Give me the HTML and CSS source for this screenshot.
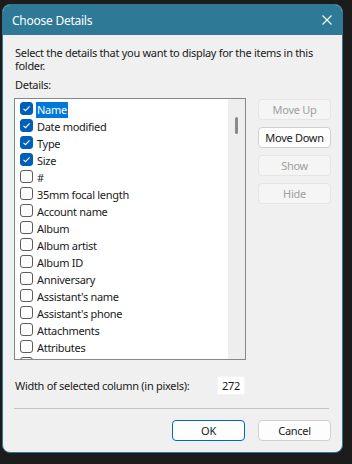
FILE: index.html
```html
<!DOCTYPE html>
<html lang="en">
<head>
    <meta charset="UTF-8">
    <title>Choose Details</title>
    <link rel="stylesheet" href="styles.css">
</head>
<body>
    <div class="dialog">
        <div class="titlebar">
            <span class="title">Choose Details</span>
            <svg class="close" width="10" height="10" viewBox="0 0 10 10">
                <path d="M0.5 0.5L9.5 9.5M9.5 0.5L0.5 9.5" stroke="#ffffff" stroke-width="1.1"/>
            </svg>
        </div>
        <div class="content">
            <p class="intro">Select the details that you want to display for the items in this folder.</p>
            <p class="label">Details:</p>
            <div class="picker">
                <div class="listbox">
                    <ul class="items">
                        <li class="item checked selected"><span class="box"></span><span class="name">Name</span></li>
                        <li class="item checked"><span class="box"></span><span class="name">Date modified</span></li>
                        <li class="item checked"><span class="box"></span><span class="name">Type</span></li>
                        <li class="item checked"><span class="box"></span><span class="name">Size</span></li>
                        <li class="item"><span class="box"></span><span class="name">#</span></li>
                        <li class="item"><span class="box"></span><span class="name">35mm focal length</span></li>
                        <li class="item"><span class="box"></span><span class="name">Account name</span></li>
                        <li class="item"><span class="box"></span><span class="name">Album</span></li>
                        <li class="item"><span class="box"></span><span class="name">Album artist</span></li>
                        <li class="item"><span class="box"></span><span class="name">Album ID</span></li>
                        <li class="item"><span class="box"></span><span class="name">Anniversary</span></li>
                        <li class="item"><span class="box"></span><span class="name">Assistant's name</span></li>
                        <li class="item"><span class="box"></span><span class="name">Assistant's phone</span></li>
                        <li class="item"><span class="box"></span><span class="name">Attachments</span></li>
                        <li class="item"><span class="box"></span><span class="name">Attributes</span></li>
                        <li class="item"><span class="box"></span></li>
                    </ul>
                    <div class="scrollbar"><div class="thumb"></div></div>
                </div>
                <div class="side-buttons">
                    <button class="btn" disabled>Move Up</button>
                    <button class="btn">Move Down</button>
                    <button class="btn" disabled>Show</button>
                    <button class="btn" disabled>Hide</button>
                </div>
            </div>
            <div class="width-row">
                <span>Width of selected column (in pixels):</span>
                <span class="width-input">272</span>
            </div>
            <div class="separator"></div>
            <div class="actions">
                <button class="btn primary">OK</button>
                <button class="btn">Cancel</button>
            </div>
        </div>
    </div>
</body>
</html>
```

FILE: styles.css
```css
* {
    margin: 0;
    padding: 0;
    box-sizing: border-box;
}

body {
    background-color: #1c1c1c;
    font-family: 'Noto Sans', 'Open Sans', sans-serif;
    font-size: 11px;
    letter-spacing: -0.3px;
    color: #1a1a1a;
    height: 464px;
    overflow: hidden;
}

.dialog {
    width: 341px;
    height: 449px;
    margin: 4px 0 0 2px;
    border: 1px solid #2e7a96;
    border-radius: 8px;
    background-color: #f0f0f0;
    overflow: hidden;
    display: flex;
    flex-direction: column;
}

.titlebar {
    height: 30px;
    background-color: #2e7a96;
    display: flex;
    align-items: center;
    justify-content: space-between;
    padding: 0 10px 0 9px;
    flex-shrink: 0;
}

.title {
    color: #ffffff;
    font-size: 12px;
    letter-spacing: -0.25px;
}

.content {
    flex: 1;
    padding: 11px 11px 0 11px;
    display: flex;
    flex-direction: column;
}

.intro {
    line-height: 13px;
    padding-left: 1px;
}

.label {
    margin-top: 6px;
    line-height: 13px;
    padding-left: 1px;
}

.picker {
    display: flex;
    gap: 12px;
    margin-top: 7px;
}

/* List of columns with checkboxes */
.listbox {
    width: 233px;
    height: 262px;
    border: 1px solid #828790;
    background-color: #ffffff;
    display: flex;
    overflow: hidden;
}

.items {
    list-style: none;
    flex: 1;
    padding-top: 1px;
    overflow: hidden;
}

.item {
    height: 17px;
    display: flex;
    align-items: center;
    padding-left: 5px;
    white-space: nowrap;
}

.box {
    width: 13px;
    height: 13px;
    border: 1px solid #5c5c5c;
    border-radius: 3px;
    background-color: #fdfdfd;
    margin-right: 3px;
    flex-shrink: 0;
}

.item.checked .box {
    border-color: #005fb8;
    background-color: #005fb8;
    background-image: url("data:image/svg+xml,%3Csvg xmlns='http://www.w3.org/2000/svg' width='11' height='11' viewBox='0 0 11 11'%3E%3Cpath d='M2.5 5.8L4.5 7.7L8.6 3.4' fill='none' stroke='white' stroke-width='1.1'/%3E%3C/svg%3E");
    background-repeat: no-repeat;
}

.name {
    padding: 0 1px;
    line-height: 16px;
    margin-top: 2px;
}

.item.selected .name {
    background-color: #0078d7;
    color: #ffffff;
}

.scrollbar {
    width: 17px;
    background-color: #eeeeee;
    padding: 18px 0 0 7px;
}

.thumb {
    width: 3px;
    height: 17px;
    border-radius: 2px;
    background-color: #8a8a8a;
}

/* Buttons */
.side-buttons {
    display: flex;
    flex-direction: column;
    gap: 7px;
    padding-top: 1px;
}

.btn {
    width: 73px;
    height: 21px;
    font-family: inherit;
    font-size: 11px;
    letter-spacing: -0.3px;
    color: #1a1a1a;
    background-color: #fdfdfd;
    border: 1px solid #d0d0d0;
    border-radius: 4px;
}

.btn:disabled {
    background-color: #f5f5f5;
    border-color: #e5e5e5;
    color: #a0a0a0;
}

.btn.primary {
    border-color: #0067c0;
}

.width-row {
    width: 231px;
    margin-top: 16px;
    display: flex;
    align-items: center;
    justify-content: space-between;
    padding-left: 1px;
}

.width-input {
    width: 28px;
    height: 19px;
    background-color: #ffffff;
    border: 1px solid #f4f4f4;
    text-align: center;
    line-height: 17px;
}

.separator {
    height: 1px;
    width: 315px;
    background-color: #c4c4c4;
    margin-top: 13px;
}

.actions {
    display: flex;
    justify-content: flex-end;
    gap: 13px;
    margin-top: 11px;
}
```
